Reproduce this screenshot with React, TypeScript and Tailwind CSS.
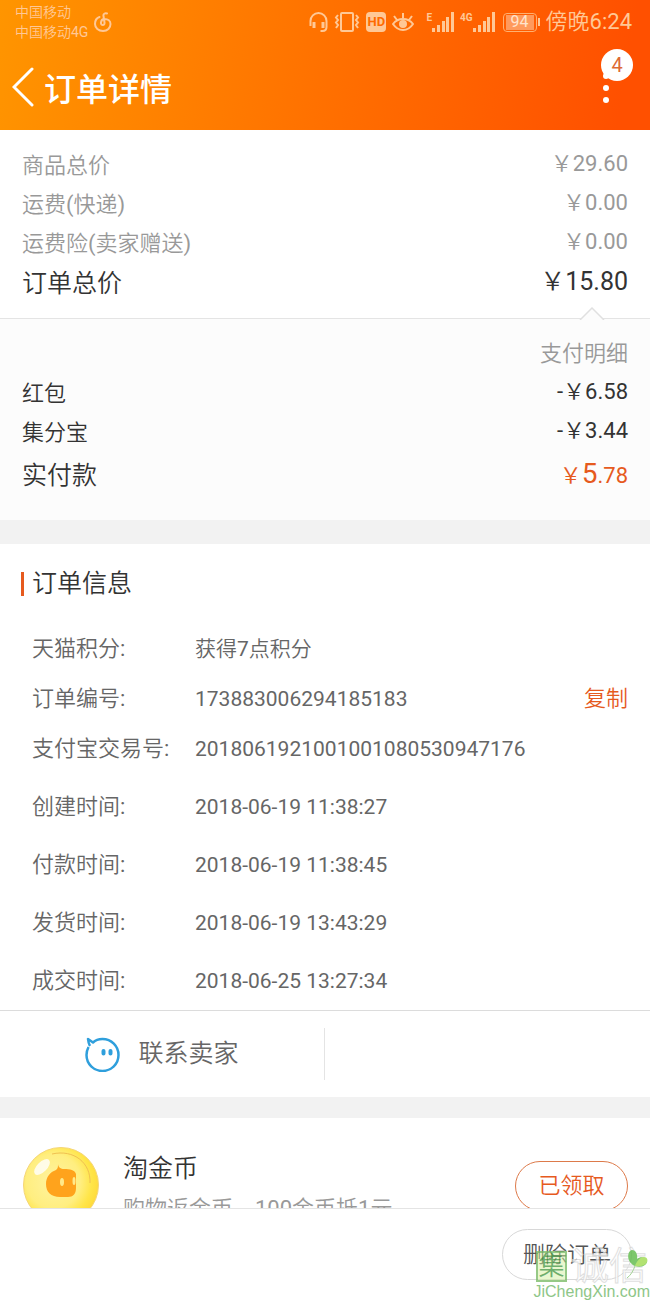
import React from 'react';

interface PriceRowProps {
  label: string;
  value: string;
  className: string;
}

const ORDER_INFO = [
  { label: '天猫积分:', value: '获得7点积分' },
  { label: '订单编号:', value: '173883006294185183', copy: true },
  { label: '支付宝交易号:', value: '2018061921001001080530947176' },
];

const ORDER_TIMES = [
  { label: '创建时间:', value: '2018-06-19 11:38:27' },
  { label: '付款时间:', value: '2018-06-19 11:38:45' },
  { label: '发货时间:', value: '2018-06-19 13:43:29' },
  { label: '成交时间:', value: '2018-06-25 13:27:34' },
];

function PriceRow({ label, value, className }: PriceRowProps) {
  return (
    <div className={`flex items-center justify-between ${className}`}>
      <dt>{label}</dt>
      <dd className="pb-1">{value}</dd>
    </div>
  );
}

function Signal() {
  return (
    <svg width="22" height="20" viewBox="0 0 22 20" fill="currentColor">
      <rect x="0" y="16" width="3" height="4" />
      <rect x="5" y="13" width="3" height="7" />
      <rect x="10" y="9" width="3" height="11" />
      <rect x="14" y="5" width="3" height="15" />
      <rect x="19" y="0" width="3" height="20" />
    </svg>
  );
}

function StatusBar() {
  return (
    <div className="flex h-11 items-start justify-between pr-[18px] pl-[15px] text-[#ffc896]">
      <div className="flex items-center gap-[6px] pt-[2px]">
        <div className="text-sm leading-5">
          <p>中国移动</p>
          <p>中国移动4G</p>
        </div>
        <svg width="18" height="20" viewBox="0 0 18 20" fill="none" stroke="currentColor" strokeWidth="2" strokeLinecap="round">
          <path d="M13 1.500C11 .8 9 2 9.500 4l1 6.500c.2 1.500-.6 2.500-1.700 2.500S6.800 12 7 10.500C7.200 8.500 8.500 7 10.500 7c3.500 0 6 2 6 5 0 4-3 7-7.500 7s-8-3-8-7c0-3.500 1.500-6 4.500-7" />
        </svg>
      </div>
      <div className="flex items-center pt-1">
        <svg className="mr-[6px]" width="19" height="22" viewBox="0 0 19 22" fill="none" stroke="currentColor" strokeWidth="2">
          <path d="M1.500 15V10a8 8 0 0 1 16 0v6c0 2.500-1.500 4-4 4h-2" />
          <path d="M5 11v6M14 11v6" strokeWidth="3" />
        </svg>
        <svg className="mr-[6px]" width="26" height="20" viewBox="0 0 26 20" fill="none" stroke="currentColor" strokeWidth="2">
          <rect x="7" y="1" width="12" height="18" rx="1" />
          <path d="M4 3 2 5.500 4 8l-2 2.500L4 13l-2 3M22 3l2 2.500L22 8l2 2.500-2 2.500 2 3" />
        </svg>
        <div className="mr-[6px] flex h-5 w-5 items-center justify-center rounded-sm bg-[#ffc896] text-[13px] font-bold text-[#ff6a00]">
          HD
        </div>
        <svg className="mr-3" width="22" height="20" viewBox="0 0 22 20" fill="none" stroke="currentColor" strokeWidth="2">
          <path d="M1 12c3-4 6-5 10-5s7 1 10 5c-3 4.500-6 6-10 6s-7-1.500-10-6ZM11 1v5M2 4l3 4M20 4l-3 4" />
          <circle cx="11" cy="12" r="3" fill="currentColor" />
        </svg>
        <div className="flex items-start">
          <span className="text-[10px] leading-3 font-bold">E</span>
          <Signal />
        </div>
        <div className="ml-[6px] flex items-start">
          <span className="text-[10px] leading-3 font-bold">4G</span>
          <Signal />
        </div>
        <div className="ml-2 flex h-[19px] w-[34px] items-center justify-center rounded-sm border border-[#ffb070] p-px">
          <div className="flex h-full w-7 items-center justify-center bg-[#ff9a5c] text-base leading-4 text-[#ffe4cc]">94</div>
        </div>
        <div className="ml-px h-2 w-[2px] bg-[#ffc896]" />
        <span className="ml-[6px] text-[22px] leading-9">傍晚6:24</span>
      </div>
    </div>
  );
}

function Header() {
  return (
    <header className="h-[130px] shrink-0 bg-[linear-gradient(100deg,#ff9500_0%,#ff5000_95%)]">
      <StatusBar />
      <div className="flex h-[86px] items-center pr-9 pl-3">
        <button aria-label="返回" className="mr-[9px] text-white">
          <svg width="23" height="40" viewBox="0 0 23 40" fill="none" stroke="currentColor" strokeWidth="3" strokeLinecap="round">
            <path d="M20 2 2 20l18 18" />
          </svg>
        </button>
        <h1 className="flex-1 font-['Noto_Sans_CJK_SC',sans-serif] text-[32px] leading-10 font-medium text-white">订单详情</h1>
        <button aria-label="更多" className="relative h-10 w-4">
          <svg className="mx-auto mt-1" width="8" height="34" viewBox="0 0 8 34" fill="#fff">
            <circle cx="4" cy="4" r="3" />
            <circle cx="4" cy="16" r="3" />
            <circle cx="4" cy="28" r="3" />
          </svg>
          <span className="absolute -top-[18px] left-[3px] flex h-8 w-8 items-center justify-center rounded-full bg-white text-[20px] text-[#dd6a33]">
            4
          </span>
        </button>
      </div>
    </header>
  );
}

function PriceSummary() {
  return (
    <section>
      <dl className="px-[22px] pt-4 pb-[13px] text-[#999]">
        <PriceRow label="商品总价" value="￥29.60" className="h-[39px]" />
        <PriceRow label="运费(快递)" value="￥0.00" className="h-[39px]" />
        <PriceRow label="运费险(卖家赠送)" value="￥0.00" className="h-[39px]" />
        <PriceRow label="订单总价" value="￥15.80" className="h-[42px] text-[25px] text-[#333]" />
      </dl>
      <div className="relative border-t border-[#e4e4e4] bg-[#fcfcfc] px-[22px] pt-[15px] pb-[22px]">
        <svg className="absolute -top-3 right-[45px]" width="26" height="13" viewBox="0 0 26 13" fill="#fcfcfc" stroke="#e0e0e0" strokeWidth="1.500">
          <path d="M1 13 13 1l12 12" />
        </svg>
        <h2 className="flex h-10 items-center justify-end text-[#999]">支付明细</h2>
        <dl className="text-[#333]">
          <PriceRow label="红包" value="-￥6.58" className="h-[39px]" />
          <PriceRow label="集分宝" value="-￥3.44" className="h-[39px]" />
          <div className="flex h-[46px] items-center justify-between">
            <dt className="pt-[2px] text-[25px]">实付款</dt>
            <dd className="text-[#e65a1e]">
              ￥<span className="text-[28px]">5</span>.78
            </dd>
          </div>
        </dl>
      </div>
    </section>
  );
}

function OrderInfo() {
  return (
    <section className="border-b border-[#dcdcdc] pt-5 pr-[22px] pl-[21px]">
      <h2 className="flex h-10 items-center text-[25px] text-[#333]">
        <span className="mr-2 h-6 w-[3px] bg-[#e65a1e]" />
        订单信息
      </h2>
      <dl className="pt-5 pl-[11px] text-[#666]">
        {ORDER_INFO.map((row) => (
          <div key={row.label} className="flex h-[50px] items-center">
            <dt className="w-[163px] shrink-0">{row.label}</dt>
            <dd className="flex flex-1 justify-between text-[21px]">
              {row.value}
              {row.copy && <button className="text-[22px] text-[#e65a1e]">复制</button>}
            </dd>
          </div>
        ))}
      </dl>
      <dl className="pt-1 pl-[11px] text-[#666]">
        {ORDER_TIMES.map((row) => (
          <div key={row.label} className="flex h-[58px] items-center">
            <dt className="w-[163px] shrink-0">{row.label}</dt>
            <dd className="text-[21px]">{row.value}</dd>
          </div>
        ))}
      </dl>
    </section>
  );
}

function ContactSeller() {
  return (
    <section className="flex h-[86px] items-center">
      <button className="flex h-[52px] w-1/2 items-center justify-center gap-[18px] border-r border-[#e4e4e4] text-[25px] text-[#666]">
        <svg width="35" height="35" viewBox="0 0 35 35" fill="none" stroke="#2f9fdc" strokeWidth="2.500" strokeLinejoin="round">
          <path d="M3.500 10C2 13 1.500 15 1.500 18a16 16 0 1 0 16-16c-4 0-7 1-9.500 3.500L3 2c.3 3 .8 5 2 7" />
          <path d="M18.500 14v2.500M25.500 14v2.500" strokeWidth="4" strokeLinecap="round" />
        </svg>
        联系卖家
      </button>
    </section>
  );
}

function Coin() {
  return (
    <svg className="shrink-0" width="78" height="78" viewBox="0 0 78 78">
      <defs>
        <radialGradient id="coin" cx="40%" cy="45%" r="60%">
          <stop offset="0" stopColor="#fff3a0" />
          <stop offset="0.6" stopColor="#ffee80" />
          <stop offset="0.85" stopColor="#ffe548" />
          <stop offset="1" stopColor="#ffdc3c" />
        </radialGradient>
      </defs>
      <circle cx="39" cy="39" r="37.500" fill="url(#coin)" stroke="#f5d678" />
      <path d="M30 8c22-5 39 9 38 29" fill="none" stroke="#f0c050" />
      <ellipse cx="20" cy="21" rx="10" ry="5" fill="#fff" opacity="0.800" transform="rotate(-45 20 21)" />
      <path d="M36 18c0 3 3 5 6 5 6 0 11 1 12 5v14c0 6-3 9-8 9H38c-9 0-14-5-14-13 0-7 4-12 10-14 2-2 2-3 2-6Z" fill="#ffa31c" />
      <ellipse cx="40" cy="36" rx="2" ry="4" fill="#ffe98a" />
      <ellipse cx="52" cy="35" rx="1.500" ry="4" fill="#ffe98a" />
    </svg>
  );
}

function CoinPromo() {
  return (
    <section className="flex items-start px-[22px] pt-7">
      <Coin />
      <div className="flex-1 pt-[5px] pl-[23px]">
        <h2 className="text-[25px] leading-9 text-[#333]">淘金币</h2>
        <p className="mt-1 leading-9 text-[#999]">购物返金币，100金币抵1元</p>
      </div>
      <button className="mt-[15px] h-[50px] w-[113px] rounded-full border border-[#dd7a4a] text-[#e65a1e]">已领取</button>
    </section>
  );
}

function Watermark() {
  return (
    <div className="pointer-events-none absolute right-0 bottom-0 w-[120px] opacity-80">
      <div className="flex h-9 items-center gap-1 pl-[6px]">
        <span className="flex h-[31px] w-[31px] shrink-0 items-center justify-center border-2 border-[#7cbc68] bg-[#d2f09c]/60 text-[26px] leading-7 text-[#4c9a48]">
          集
        </span>
        <span className="text-[38px] leading-9 whitespace-nowrap text-white [-webkit-text-stroke:1px_#d8d8d8]">诚信</span>
      </div>
      <svg className="absolute top-0 right-0" width="24" height="36" viewBox="0 0 24 36">
        <path d="M9 18C0 14 1 3 6 2c4 0 6 5 5 9 3-3 9-2 10 1 1 5-5 8-12 6Z" fill="#5cba47" />
        <path d="M9 18c1-4 5-9 9-9 3 0 4 3 3 5-2 4-7 5-12 4Z" fill="#a0dc50" />
        <path d="M9 18c-2 5-4 9-8 12" fill="none" stroke="#8cc878" />
      </svg>
      <p className="text-right font-['Liberation_Sans'] text-base leading-4 whitespace-nowrap text-[#72b86a]">JiChengXin.com</p>
    </div>
  );
}

export default function App() {
  return (
    <div className="flex h-screen flex-col bg-white font-['Roboto','Noto_Sans_CJK_SC_DemiLight','Noto_Sans_CJK_SC',sans-serif] text-[22px] leading-8">
      <Header />
      <main className="min-h-0 flex-1 overflow-y-auto [scrollbar-width:none]">
        <PriceSummary />
        <div className="h-6 bg-[#f2f2f2]" />
        <OrderInfo />
        <ContactSeller />
        <div className="h-[21px] bg-[#f2f2f2]" />
        <CoinPromo />
      </main>
      <footer className="relative flex h-[92px] shrink-0 items-center justify-end border-t border-[#e4e4e4] bg-white pr-[18px]">
        <button className="h-[51px] w-[130px] rounded-full border border-[#d8d8d8] text-[#555]">删除订单</button>
        <Watermark />
      </footer>
    </div>
  );
}
